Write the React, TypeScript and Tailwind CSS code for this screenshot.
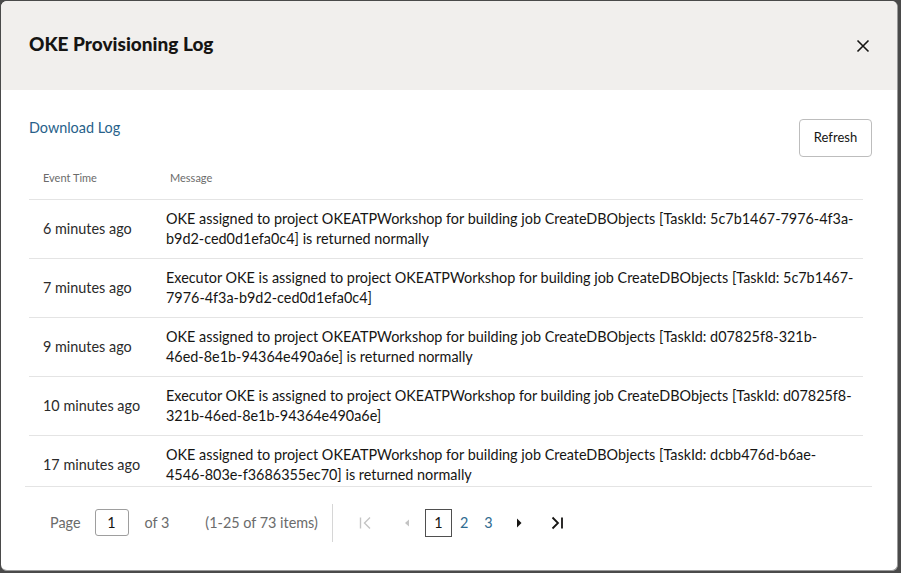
import React from "react";

const rows = [
  {
    time: "6 minutes ago",
    l1: "OKE assigned to project OKEATPWorkshop for building job CreateDBObjects [TaskId: 5c7b1467-7976-4f3a-",
    l2: "b9d2-ced0d1efa0c4] is returned normally",
  },
  {
    time: "7 minutes ago",
    l1: "Executor OKE is assigned to project OKEATPWorkshop for building job CreateDBObjects [TaskId: 5c7b1467-",
    l2: "7976-4f3a-b9d2-ced0d1efa0c4]",
  },
  {
    time: "9 minutes ago",
    l1: "OKE assigned to project OKEATPWorkshop for building job CreateDBObjects [TaskId: d07825f8-321b-",
    l2: "46ed-8e1b-94364e490a6e] is returned normally",
  },
  {
    time: "10 minutes ago",
    l1: "Executor OKE is assigned to project OKEATPWorkshop for building job CreateDBObjects [TaskId: d07825f8-",
    l2: "321b-46ed-8e1b-94364e490a6e]",
  },
  {
    time: "17 minutes ago",
    l1: "OKE assigned to project OKEATPWorkshop for building job CreateDBObjects [TaskId: dcbb476d-b6ae-",
    l2: "4546-803e-f3686355ec70] is returned normally",
  },
];

export default function App() {
  return (
    <div
      className="w-[901px] h-[573px] bg-[#4a4a4a] pt-px pl-px pr-[3px] pb-[2px] overflow-hidden"
      style={{ fontFamily: '"Lato", "Noto Sans", sans-serif' }}
    >
      <div className="w-full h-full bg-white rounded-[6px] overflow-hidden flex flex-col border-r border-b border-[#9a9a9a]">
        {/* Header */}
        <div className="h-[89px] shrink-0 bg-[#f1efed] flex items-center justify-between pl-[28px] pr-[27px]">
          <h1 className="text-[19px] font-black text-[#161513] leading-none -mt-[4px]">
            OKE Provisioning Log
          </h1>
          <svg width="14" height="14" viewBox="0 0 14 14" className="mt-[1px]">
            <path d="M1.5 1.5 L12.5 12.5 M12.5 1.5 L1.5 12.5" stroke="#161513" strokeWidth="1.6" fill="none" />
          </svg>
        </div>

        {/* Body */}
        <div className="flex-1 flex flex-col pl-[28px] pr-[25px] pt-[29px]">
          <div className="flex justify-between items-start">
            <a className="text-[14.4px] leading-[20px] text-[#27618a] -mt-[1px]">Download Log</a>
            <button className="h-[38px] w-[73px] border border-[#bdbdbd] rounded-[4px] text-[13px] text-[#161513] bg-white">
              Refresh
            </button>
          </div>

          <div className="w-[834px]">
            <div className="h-[43px] flex items-center border-b border-[#e4e4e4] text-[11px] text-[#6b6b6b]">
              <div className="w-[123px] pl-[14px]">Event Time</div>
              <div className="pl-[18px]">Message</div>
            </div>
            <div className="h-[286px] overflow-hidden">
              {rows.map((r, i) => (
                <div key={i} className="h-[59px] flex items-center border-b border-[#e4e4e4] text-[14.4px] text-[#161513]">
                  <div className="w-[123px] pl-[14px] shrink-0 text-[#2b2b2b]">{r.time}</div>
                  <div className="pl-[14px] leading-[20px] whitespace-nowrap">
                    <div>{r.l1}</div>
                    <div>{r.l2}</div>
                  </div>
                </div>
              ))}
            </div>
          </div>

          {/* Pager */}
          <div className="-ml-[4px] w-[847px] border-t border-[#e4e4e4] h-[72px] flex items-center text-[14.4px] text-[#6b6b6b]">
            <span className="ml-[25px]">Page</span>
            <div className="ml-[14px] w-[34px] h-[27px] border border-[#9e9e9e] rounded-[3px] flex items-center justify-center text-[#161513]">
              1
            </div>
            <span className="ml-[16px]">of 3</span>
            <span className="ml-[36px]">(1-25 of 73 items)</span>
            <div className="ml-[14px] w-px h-[38px] bg-[#d6d6d6]" />
            <svg width="16" height="16" viewBox="0 0 16 16" className="ml-[25px]">
              <path d="M2.5 2.5 V13.5" stroke="#c4c4c4" strokeWidth="1.4" />
              <path d="M12 2.5 L6.5 8 L12 13.5" stroke="#c4c4c4" strokeWidth="1.4" fill="none" />
            </svg>
            <svg width="10" height="12" viewBox="0 0 10 12" className="ml-[28px]">
              <path d="M7 2.5 L3 6 L7 9.5 Z" fill="#c4c4c4" />
            </svg>
            <div className="ml-[13px] w-[27px] h-[28px] border border-[#4f4f4f] flex items-center justify-center text-[#161513]">
              1
            </div>
            <span className="ml-[8px] text-[#2f6b90]">2</span>
            <span className="ml-[16px] text-[#2f6b90]">3</span>
            <svg width="10" height="12" viewBox="0 0 10 12" className="ml-[21px]">
              <path d="M3 1.5 L7.5 6 L3 10.5 Z" fill="#161513" />
            </svg>
            <svg width="16" height="16" viewBox="0 0 16 16" className="ml-[25px]">
              <path d="M3.5 2.5 L9 8 L3.5 13.5" stroke="#161513" strokeWidth="1.8" fill="none" />
              <path d="M13 2.5 V13.5" stroke="#161513" strokeWidth="1.8" />
            </svg>
          </div>
        </div>
      </div>
    </div>
  );
}
